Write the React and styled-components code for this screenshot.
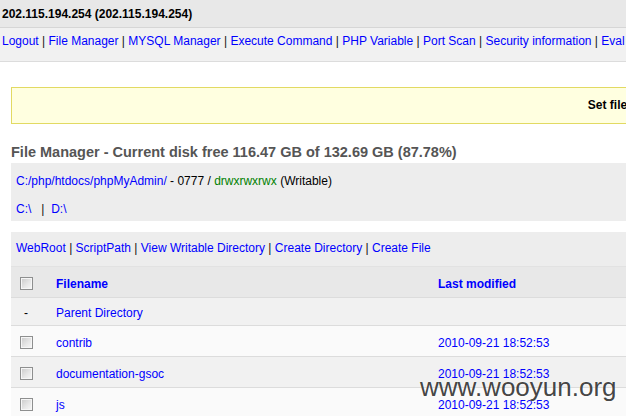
import React from 'react'
import styled, { createGlobalStyle } from 'styled-components'

const GlobalStyle = createGlobalStyle`
  html, body {
    margin: 0;
    padding: 0;
    overflow: hidden;
    background: #fff;
  }
  body {
    font-family: 'Liberation Sans', Arial, sans-serif;
    font-size: 12px;
    line-height: 16px;
    color: #000;
  }
`

const navLinks = [
  'Logout',
  'File Manager',
  'MYSQL Manager',
  'Execute Command',
  'PHP Variable',
  'Port Scan',
  'Security information',
  'Eval PHP Code',
]

const toolLinks = [
  'WebRoot',
  'ScriptPath',
  'View Writable Directory',
  'Create Directory',
  'Create File',
]

const files = [
  { id: 1, name: 'contrib', modified: '2010-09-21 18:52:53' },
  { id: 2, name: 'documentation-gsoc', modified: '2010-09-21 18:52:53' },
  { id: 3, name: 'js', modified: '2010-09-21 18:52:53' },
]

const Joined = ({ items }) =>
  items.map((item, i) => (
    <React.Fragment key={item}>
      {i > 0 && <Sep> | </Sep>}
      <Link href="#">{item}</Link>
    </React.Fragment>
  ))

const App = () => {
  return (
    <Page>
      <GlobalStyle />
      <TopBar>
        <Host>202.115.194.254 (202.115.194.254)</Host>
      </TopBar>
      <NavBar>
        <Joined items={navLinks} />
      </NavBar>
      <Content>
        <Notice>Set file time</Notice>
        <Title>File Manager - Current disk free 116.47 GB of 132.69 GB (87.78%)</Title>
        <InfoBox>
          <InfoLine>
            <Link href="#">C:/php/htdocs/phpMyAdmin/</Link> - 0777 / <Perm>drwxrwxrwx</Perm> (Writable)
          </InfoLine>
          <InfoLine>
            <Link href="#">C:\</Link>
            <Sep>{'\u00a0\u00a0\u00a0|\u00a0\u00a0'}</Sep>
            <Link href="#">D:\</Link>
          </InfoLine>
        </InfoBox>
        <ToolBox>
          <Joined items={toolLinks} />
        </ToolBox>
        <FileTable>
          <colgroup>
            <col style={{ width: 45 }} />
            <col style={{ width: 382 }} />
            <col style={{ width: 200 }} />
            <col style={{ width: 120 }} />
            <col style={{ width: 160 }} />
            <col />
          </colgroup>
          <thead>
            <Row $bg="#e8e8e8" $height={31}>
              <CheckCell><Check /></CheckCell>
              <HeadCell><HeadLink href="#">Filename</HeadLink></HeadCell>
              <HeadCell><HeadLink href="#">Last modified</HeadLink></HeadCell>
              <HeadCell><HeadLink href="#">Size</HeadLink></HeadCell>
              <HeadCell>Chmod / Perms</HeadCell>
              <HeadCell>Action</HeadCell>
            </Row>
          </thead>
          <tbody>
            <Row $bg="#f1f1f1" $height={28}>
              <DashCell>-</DashCell>
              <Cell><Link href="#">Parent Directory</Link></Cell>
              <Cell />
              <Cell />
              <Cell />
              <Cell />
            </Row>
            {files.map((f, i) => (
              <Row key={f.id} $bg={i % 2 === 0 ? '#fafafa' : '#f1f1f1'} $height={31}>
                <CheckCell><Check /></CheckCell>
                <Cell><Link href="#">{f.name}</Link></Cell>
                <Cell><Link href="#">{f.modified}</Link></Cell>
                <Cell>-</Cell>
                <Cell><Link href="#">0777</Link> / <Link href="#">drwxrwxrwx</Link></Cell>
                <Cell><Link href="#">Rename</Link></Cell>
              </Row>
            ))}
          </tbody>
        </FileTable>
      </Content>
      <Watermark>www.wooyun.org</Watermark>
    </Page>
  )
}

export default App

const Page = styled.div`
  position: relative;
  width: 1243px;
  height: 416px;
  overflow: hidden;
`
const TopBar = styled.div`
  background: #e8e8e8;
  border-bottom: 1px solid #d6d6d6;
  padding: 6px 2px 5px;
`
const Host = styled.div`
  font-weight: bold;
`
const NavBar = styled.div`
  background: #f1f1f1;
  border-bottom: 1px solid #dcdcdc;
  padding: 5px 2px 12px;
  white-space: nowrap;
`
const Link = styled.a`
  color: #0000ff;
  text-decoration: none;
`
const Sep = styled.span`
  color: #111;
  white-space: pre;
`
const Content = styled.div`
  padding: 0 11px;
`
const Notice = styled.div`
  margin-top: 25px;
  background: #ffffe0;
  border: 1px solid #e2da62;
  padding: 9px 0 10px;
  text-align: center;
  font-weight: bold;
`
const Title = styled.h2`
  margin: 19px 0 2px;
  font-size: 14.5px;
  line-height: 18px;
  font-weight: bold;
  color: #555;
  white-space: nowrap;
`
const InfoBox = styled.div`
  background: #ededed;
  padding: 10px 5px 4px;
  display: flex;
  flex-direction: column;
  gap: 12px;
`
const InfoLine = styled.div``
const Perm = styled.span`
  color: #008000;
`
const ToolBox = styled.div`
  margin-top: 11px;
  background: #ededed;
  padding: 8px 5px 10px;
`
const FileTable = styled.table`
  width: 100%;
  border-collapse: collapse;
  table-layout: fixed;
  border-top: 1px solid #e2e2e2;
`
const Row = styled.tr`
  background: ${(p) => p.$bg};
  height: ${(p) => p.$height}px;
  border-bottom: 1px solid #dcdcdc;
`
const Cell = styled.td`
  padding: 3px 0 0;
  vertical-align: middle;
  white-space: nowrap;
`
const HeadCell = styled(Cell).attrs({ as: 'th' })`
  text-align: left;
  font-weight: bold;
  color: #000;
`
const HeadLink = styled(Link)`
  font-weight: bold;
`
const CheckCell = styled(Cell)`
  padding-left: 9px;
  line-height: 0;
`
const DashCell = styled(Cell)`
  padding-left: 13px;
`
const Check = styled.span`
  display: inline-block;
  width: 11px;
  height: 11px;
  border: 1px solid #8e8f8f;
  box-shadow: inset 0 0 0 1px #f6f6f6;
  background: linear-gradient(135deg, #c9c9c9 0%, #e6e6e6 55%, #f8f8f8 100%);
  vertical-align: middle;
`
const Watermark = styled.div`
  position: absolute;
  left: 420px;
  top: 374px;
  font-family: 'Liberation Sans', Arial, sans-serif;
  font-size: 26px;
  line-height: 26px;
  color: rgba(45, 45, 45, 0.9);
  text-shadow: 0 0 2px rgba(255, 255, 255, 0.8);
  pointer-events: none;
`
